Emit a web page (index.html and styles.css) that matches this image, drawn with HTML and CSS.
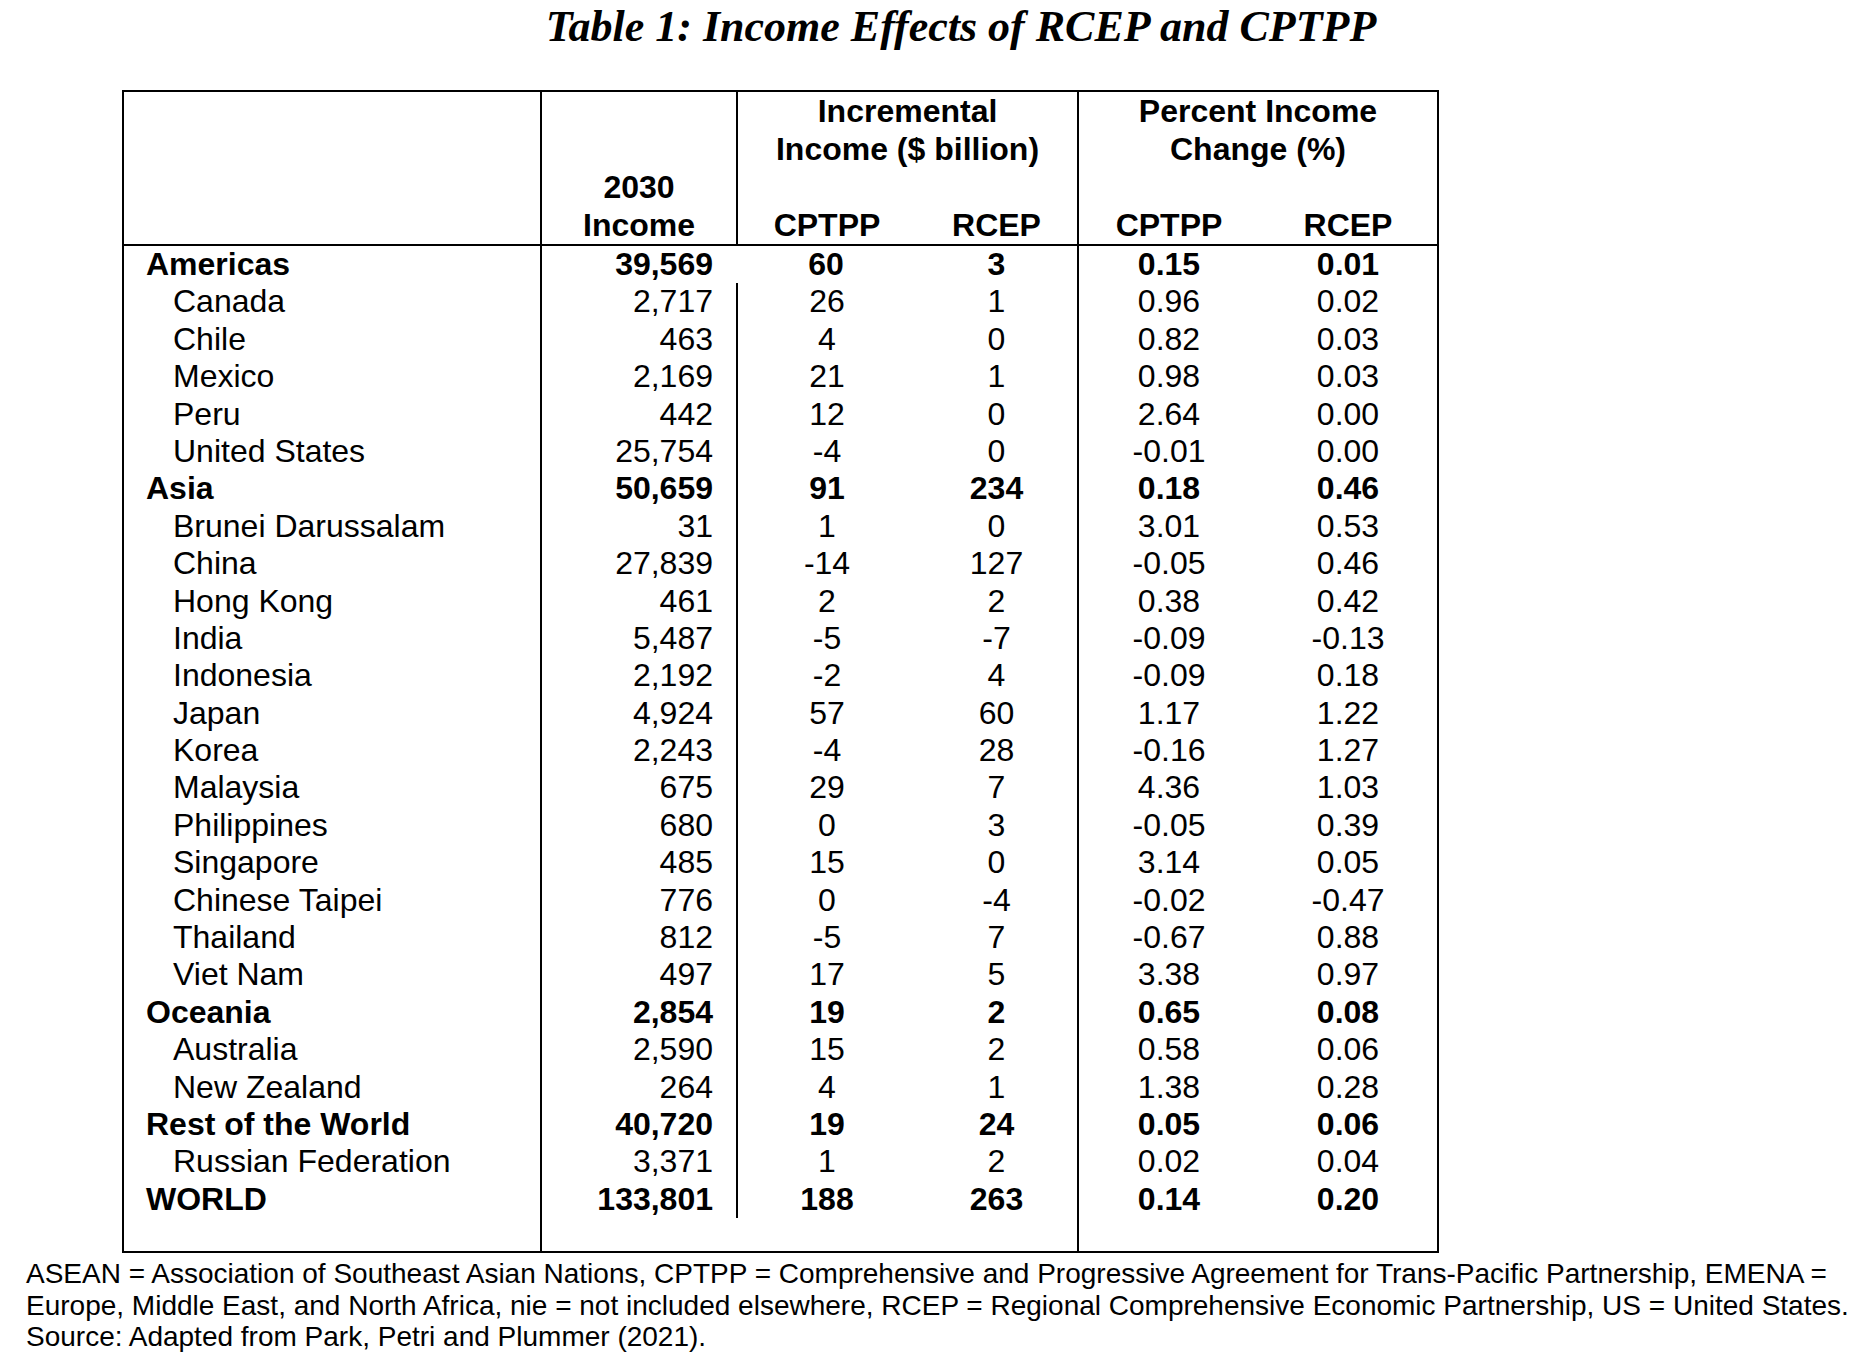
FILE: index.html
```html
<!DOCTYPE html>
<html lang="en">
<head>
<meta charset="utf-8">
<title>Table 1: Income Effects of RCEP and CPTPP</title>
<link rel="stylesheet" href="styles.css">
</head>
<body>
<h1 class="title">Table 1: Income Effects of RCEP and CPTPP</h1>
<div class="tbl">
  <div class="thead">
    <div class="h-blank"></div>
    <div class="h-year"><span>2030</span><span>Income</span></div>
    <div class="h-grp g1">Incremental<br>Income ($ billion)</div>
    <div class="h-grp g2">Percent Income<br>Change (%)</div>
    <div class="h-sub s3">CPTPP</div>
    <div class="h-sub s4">RCEP</div>
    <div class="h-sub s5">CPTPP</div>
    <div class="h-sub s6">RCEP</div>
  </div>

  <div class="row region nodiv"><div class="c1">Americas</div><div class="c2">39,569</div><div class="c3">60</div><div class="c4">3</div><div class="c5">0.15</div><div class="c6">0.01</div></div>
  <div class="row"><div class="c1">Canada</div><div class="c2">2,717</div><div class="c3">26</div><div class="c4">1</div><div class="c5">0.96</div><div class="c6">0.02</div></div>
  <div class="row"><div class="c1">Chile</div><div class="c2">463</div><div class="c3">4</div><div class="c4">0</div><div class="c5">0.82</div><div class="c6">0.03</div></div>
  <div class="row"><div class="c1">Mexico</div><div class="c2">2,169</div><div class="c3">21</div><div class="c4">1</div><div class="c5">0.98</div><div class="c6">0.03</div></div>
  <div class="row"><div class="c1">Peru</div><div class="c2">442</div><div class="c3">12</div><div class="c4">0</div><div class="c5">2.64</div><div class="c6">0.00</div></div>
  <div class="row"><div class="c1">United States</div><div class="c2">25,754</div><div class="c3">-4</div><div class="c4">0</div><div class="c5">-0.01</div><div class="c6">0.00</div></div>
  <div class="row region"><div class="c1">Asia</div><div class="c2">50,659</div><div class="c3">91</div><div class="c4">234</div><div class="c5">0.18</div><div class="c6">0.46</div></div>
  <div class="row"><div class="c1">Brunei Darussalam</div><div class="c2">31</div><div class="c3">1</div><div class="c4">0</div><div class="c5">3.01</div><div class="c6">0.53</div></div>
  <div class="row"><div class="c1">China</div><div class="c2">27,839</div><div class="c3">-14</div><div class="c4">127</div><div class="c5">-0.05</div><div class="c6">0.46</div></div>
  <div class="row"><div class="c1">Hong Kong</div><div class="c2">461</div><div class="c3">2</div><div class="c4">2</div><div class="c5">0.38</div><div class="c6">0.42</div></div>
  <div class="row"><div class="c1">India</div><div class="c2">5,487</div><div class="c3">-5</div><div class="c4">-7</div><div class="c5">-0.09</div><div class="c6">-0.13</div></div>
  <div class="row"><div class="c1">Indonesia</div><div class="c2">2,192</div><div class="c3">-2</div><div class="c4">4</div><div class="c5">-0.09</div><div class="c6">0.18</div></div>
  <div class="row"><div class="c1">Japan</div><div class="c2">4,924</div><div class="c3">57</div><div class="c4">60</div><div class="c5">1.17</div><div class="c6">1.22</div></div>
  <div class="row"><div class="c1">Korea</div><div class="c2">2,243</div><div class="c3">-4</div><div class="c4">28</div><div class="c5">-0.16</div><div class="c6">1.27</div></div>
  <div class="row"><div class="c1">Malaysia</div><div class="c2">675</div><div class="c3">29</div><div class="c4">7</div><div class="c5">4.36</div><div class="c6">1.03</div></div>
  <div class="row"><div class="c1">Philippines</div><div class="c2">680</div><div class="c3">0</div><div class="c4">3</div><div class="c5">-0.05</div><div class="c6">0.39</div></div>
  <div class="row"><div class="c1">Singapore</div><div class="c2">485</div><div class="c3">15</div><div class="c4">0</div><div class="c5">3.14</div><div class="c6">0.05</div></div>
  <div class="row"><div class="c1">Chinese Taipei</div><div class="c2">776</div><div class="c3">0</div><div class="c4">-4</div><div class="c5">-0.02</div><div class="c6">-0.47</div></div>
  <div class="row"><div class="c1">Thailand</div><div class="c2">812</div><div class="c3">-5</div><div class="c4">7</div><div class="c5">-0.67</div><div class="c6">0.88</div></div>
  <div class="row"><div class="c1">Viet Nam</div><div class="c2">497</div><div class="c3">17</div><div class="c4">5</div><div class="c5">3.38</div><div class="c6">0.97</div></div>
  <div class="row region"><div class="c1">Oceania</div><div class="c2">2,854</div><div class="c3">19</div><div class="c4">2</div><div class="c5">0.65</div><div class="c6">0.08</div></div>
  <div class="row"><div class="c1">Australia</div><div class="c2">2,590</div><div class="c3">15</div><div class="c4">2</div><div class="c5">0.58</div><div class="c6">0.06</div></div>
  <div class="row"><div class="c1">New Zealand</div><div class="c2">264</div><div class="c3">4</div><div class="c4">1</div><div class="c5">1.38</div><div class="c6">0.28</div></div>
  <div class="row region"><div class="c1">Rest of the World</div><div class="c2">40,720</div><div class="c3">19</div><div class="c4">24</div><div class="c5">0.05</div><div class="c6">0.06</div></div>
  <div class="row"><div class="c1">Russian Federation</div><div class="c2">3,371</div><div class="c3">1</div><div class="c4">2</div><div class="c5">0.02</div><div class="c6">0.04</div></div>
  <div class="row region"><div class="c1">WORLD</div><div class="c2">133,801</div><div class="c3">188</div><div class="c4">263</div><div class="c5">0.14</div><div class="c6">0.20</div></div>
  <div class="row spacer nodiv"><div class="c1"></div><div class="c2"></div><div class="c3"></div><div class="c4"></div><div class="c5"></div><div class="c6"></div></div>
</div>
<p class="note">ASEAN = Association of Southeast Asian Nations, CPTPP = Comprehensive and Progressive Agreement for Trans-Pacific Partnership, EMENA =<br>Europe, Middle East, and North Africa, nie = not included elsewhere, RCEP = Regional Comprehensive Economic Partnership, US = United States.<br>Source: Adapted from Park, Petri and Plummer (2021).</p>
</body>
</html>
```

FILE: styles.css
```css
html, body {
  margin: 0;
  padding: 0;
  background: #fff;
  color: #000;
}

body {
  font-family: "Liberation Sans", Arial, sans-serif;
  overflow: hidden;
}

.title {
  margin: 1px 0 0 86px;
  width: 1750px;
  text-align: center;
  font-family: "Liberation Serif", "Times New Roman", serif;
  font-style: italic;
  font-weight: bold;
  font-size: 44px;
  line-height: 52px;
}

.tbl {
  --cols: 416px 196px 180px 161px 182px 178px;
  margin: 37px 0 0 122px;
  width: max-content;
  border: 2px solid #000;
  font-size: 32px;
}

.thead {
  display: grid;
  grid-template-columns: var(--cols);
  grid-template-rows: 115px 39px;
  font-weight: bold;
  line-height: 38px;
  text-align: center;
}

.thead > div {
  box-sizing: border-box;
  white-space: nowrap;
}

.h-blank {
  grid-column: 1;
  grid-row: 1 / 3;
  border-bottom: 2px solid #000;
}

.h-year {
  grid-column: 2;
  grid-row: 1 / 3;
  border-left: 2px solid #000;
  border-bottom: 2px solid #000;
  display: flex;
  flex-direction: column;
  justify-content: flex-end;
  align-items: center;
}

.h-grp.g1 {
  grid-column: 3 / 5;
  grid-row: 1;
  border-left: 2px solid #000;
}

.h-grp.g2 {
  grid-column: 5 / 7;
  grid-row: 1;
  border-left: 2px solid #000;
}

.h-sub {
  grid-row: 2;
  border-bottom: 2px solid #000;
  line-height: 37px;
}

.s3 { grid-column: 3; border-left: 2px solid #000; }
.s4 { grid-column: 4; }
.s5 { grid-column: 5; border-left: 2px solid #000; }
.s6 { grid-column: 6; }

.row {
  display: grid;
  grid-template-columns: var(--cols);
  height: 37.4px;
  line-height: 37.4px;
}

.row > div {
  box-sizing: border-box;
  white-space: nowrap;
  text-align: center;
}

.row .c1 {
  text-align: left;
  padding-left: 49px;
}

.row.region .c1 {
  padding-left: 22px;
}

.row.region {
  font-weight: bold;
}

.row .c2 {
  text-align: right;
  padding-right: 23px;
  border-left: 2px solid #000;
}

.row .c3 {
  border-left: 2px solid #000;
}

.row.nodiv .c3 {
  border-left: 0;
}

.row .c5 {
  border-left: 2px solid #000;
}

.row.spacer {
  height: 33px;
}

.note {
  margin: 5px 0 0 26px;
  font-size: 28px;
  line-height: 31.6px;
  white-space: nowrap;
}
```
